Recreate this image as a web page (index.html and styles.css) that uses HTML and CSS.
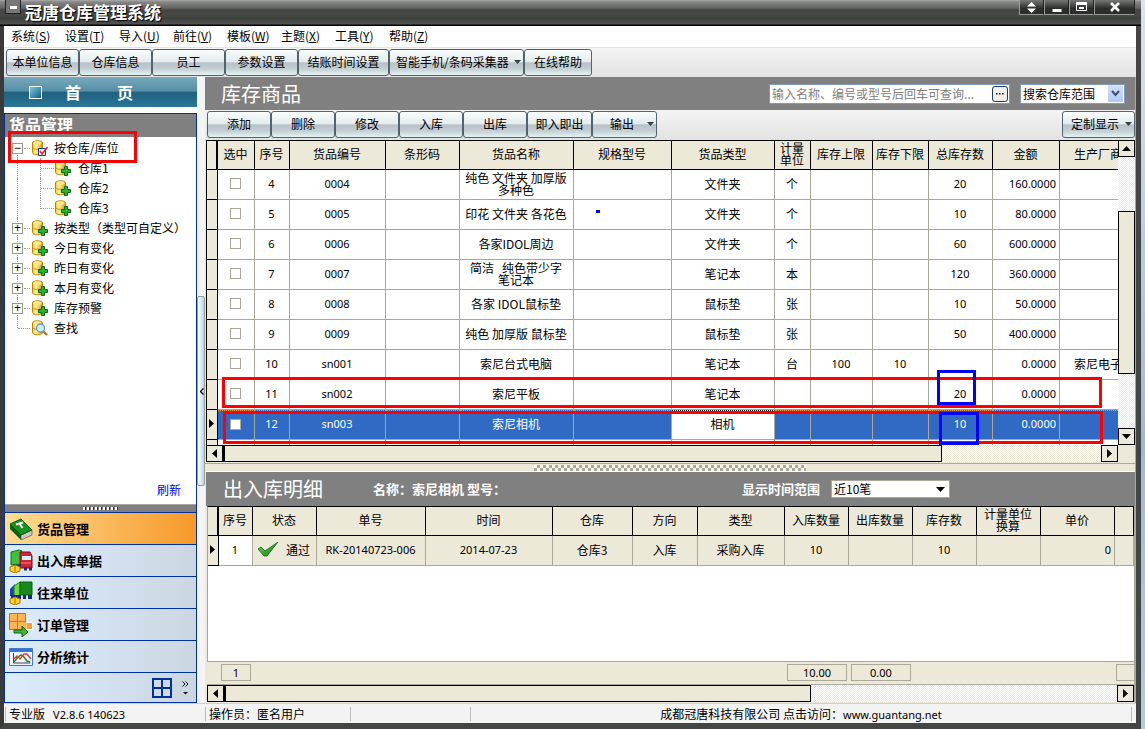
FILE: index.html
```html
<!DOCTYPE html>
<html lang="zh-CN">
<head>
<meta charset="utf-8">
<title>冠唐仓库管理系统</title>
<link rel="stylesheet" href="styles.css">
</head>
<body>
<svg class="defs" width="0" height="0" aria-hidden="true">
  <defs>
    <linearGradient id="gold" x1="0" x2="1"><stop offset="0" stop-color="#f6c81c"/><stop offset=".35" stop-color="#fff3a0"/><stop offset="1" stop-color="#d79a08"/></linearGradient>
    <linearGradient id="leaf" x1="0" y1="0" x2="1" y2="1"><stop offset="0" stop-color="#6fdc4c"/><stop offset="1" stop-color="#0c7a14"/></linearGradient>
    <symbol id="drum" viewBox="0 0 16 16"><path d="M.5 3C.5 0 10.500 0 10.500 3V12.500C10.500 15.500.5 15.500.5 12.500Z" fill="url(#gold)" stroke="#b8860b"/><ellipse cx="5.500" cy="3" rx="4" ry="1.800" fill="#ffe98a"/><path d="M1 8C2 9.800 9 9.800 10 8" fill="none" stroke="#c8920c"/></symbol>
    <symbol id="db-plus" viewBox="0 0 16 16"><use href="#drum" width="16" height="16"/><path d="M9.500 6.500h3v3h3v3h-3v3h-3v-3h-3v-3h3z" fill="#25b52a" stroke="#0b6b12"/></symbol>
    <symbol id="db-check" viewBox="0 0 16 16"><use href="#drum" width="16" height="16"/><path d="M6.500 8.500h7v7h-7z" fill="#fff" stroke="#1533b0"/><path d="M8 11l2 3 5.500-7" fill="none" stroke="#e8200c" stroke-width="1.600"/></symbol>
    <symbol id="db-find" viewBox="0 0 16 16"><use href="#drum" width="16" height="16"/><path d="M11 11l4 4" stroke="#c46a1e" stroke-width="2.400"/><circle cx="8.500" cy="8" r="4" fill="#cdeeff" stroke="#5b9bd8" stroke-width="1.300"/></symbol>
    <symbol id="up" viewBox="0 0 9 5"><path d="M0 5L4.500 0 9 5z"/></symbol>
    <symbol id="down" viewBox="0 0 9 5"><path d="M0 0h9L4.500 5z"/></symbol>
    <symbol id="left" viewBox="0 0 5 9"><path d="M5 0v9L0 4.500z"/></symbol>
    <symbol id="right" viewBox="0 0 5 9"><path d="M0 0v9l5-4.500z"/></symbol>
  </defs>
</svg>

<div class="window">
  <header class="titlebar">
    <span class="sysicon"></span>
    <h1>冠唐仓库管理系统</h1>
    <div class="winbtns">
      <button aria-label="置顶"><svg width="9" height="11" viewBox="0 0 9 11" fill="#fff"><path d="M0 4.500L4.500 0 9 4.500zM0 6.500h9L4.500 11z"/></svg></button>
      <button aria-label="最小化"><svg width="10" height="11" viewBox="0 0 10 11"><path d="M.5 7h9v3h-9z" fill="#fff"/></svg></button>
      <button aria-label="最大化"><svg width="11" height="10" viewBox="0 0 11 10" fill="none" stroke="#fff"><path d="M.5.5h10v8H.5z"/><path d="M1 2h9M3 6h5" stroke-width="2"/></svg></button>
      <button class="close" aria-label="关闭"><svg width="10" height="10" viewBox="0 0 10 10"><path d="M1 1l8 8M9 1L1 9" stroke="#fff" stroke-width="2.600"/></svg></button>
    </div>
  </header>

  <nav class="menu">
    <a href="#">系统(<u>S</u>)</a><a href="#">设置(<u>T</u>)</a><a href="#">导入(<u>U</u>)</a><a href="#">前往(<u>V</u>)</a><a href="#">模板(<u>W</u>)</a><a href="#">主题(<u>X</u>)</a><a href="#">工具(<u>Y</u>)</a><a href="#">帮助(<u>Z</u>)</a>
  </nav>

  <div class="bar bar-main">
    <button class="btn w73">本单位信息</button><button class="btn w73">仓库信息</button><button class="btn w73">员工</button><button class="btn w73">参数设置</button><button class="btn w91">结账时间设置</button><button class="btn w135 drop">智能手机/条码采集器<svg width="5" height="3"><use href="#down"/></svg></button><button class="btn w68">在线帮助</button>
  </div>

  <div class="body">
    <aside class="side">
      <button class="home"><span class="square"></span><span>首</span><span>页</span></button>
      <div class="panel">
        <h2>货品管理</h2>
        <ul class="tree">
          <li class="node first"><span class="exp">−</span><svg width="16" height="16"><use href="#db-check"/></svg>按仓库/库位</li>
          <li class="node child"><svg width="16" height="16"><use href="#db-plus"/></svg>仓库1</li>
          <li class="node child"><svg width="16" height="16"><use href="#db-plus"/></svg>仓库2</li>
          <li class="node child end"><svg width="16" height="16"><use href="#db-plus"/></svg>仓库3</li>
          <li class="node"><span class="exp">+</span><svg width="16" height="16"><use href="#db-plus"/></svg>按类型（类型可自定义）</li>
          <li class="node"><span class="exp">+</span><svg width="16" height="16"><use href="#db-plus"/></svg>今日有变化</li>
          <li class="node"><span class="exp">+</span><svg width="16" height="16"><use href="#db-plus"/></svg>昨日有变化</li>
          <li class="node"><span class="exp">+</span><svg width="16" height="16"><use href="#db-plus"/></svg>本月有变化</li>
          <li class="node"><span class="exp">+</span><svg width="16" height="16"><use href="#db-plus"/></svg>库存预警</li>
          <li class="node last"><span class="exp none"></span><svg width="16" height="16"><use href="#db-find"/></svg>查找</li>
        </ul>
        <a class="refresh" href="#">刷新</a>
        <div class="grip"><i></i></div>
        <nav class="groups">
          <button class="on"><svg width="24" height="24" viewBox="0 0 24 24"><path d="M1 7l11 11v5L1 12z" fill="#07620f"/><path d="M12 18l11-5v5l-11 5z" fill="#c9c9c9" stroke="#555" stroke-width=".7"/><path d="M1 7L12 2l11 11-11 5z" fill="#17921d" stroke="#075c0d"/><path d="M7 7.500l7-2M10.500 6.500l3 4.500" stroke="#fff" stroke-width="2"/></svg>货品管理</button>
          <button><svg width="24" height="24" viewBox="0 0 24 24"><path d="M2 3l8-2 3 1v13l-11 1z" fill="#3fc23a" stroke="#0c7518"/><path d="M11 3h10l2 4v12H11z" fill="#d22430" stroke="#7d0c1a"/><path d="M13 7h9v4h-9z" fill="#d5f0ff"/><path d="M12 14h10" stroke="#f08080"/><path d="M4 17h8M15 20h3M20 20h3" stroke="#202c75" stroke-width="3"/><path d="M1 18l5-2 5 2v4l-5 2-5-2z" fill="#ffd030" stroke="#b07800"/><path d="M6 17v6" stroke="#b07800"/></svg>出入库单据</button>
          <button><svg width="24" height="24" viewBox="0 0 24 24"><path d="M1 8l5-5v13l-5-1z" fill="#1740b4"/><path d="M5 5l6-4v13l-6 2z" fill="#6fdc35" stroke="#168a1c"/><path d="M11 1h12v13H11z" fill="#16881c" stroke="#0a6211"/><path d="M2 16h10M14 16h3M19 16h4" stroke="#15277a" stroke-width="4"/><path d="M1 18l5-2 5 2v4l-5 2-5-2z" fill="#ffd030" stroke="#b07800"/><path d="M6 17v6" stroke="#b07800"/></svg>往来单位</button>
          <button><svg width="24" height="24" viewBox="0 0 24 24"><path d="M.5.5h16v16H.5z" fill="#ffb455" stroke="#cd6a12"/><path d="M8.500 0v17M0 8.500h17" stroke="#d8751a"/><path d="M17 9.500h6.500v7H17z" fill="#ff9a2e" stroke="#fff"/><path d="M5 17h8v-4l6 6-6 5v-4H5z" fill="#46b52d" stroke="#0e6b12"/></svg>订单管理</button>
          <button><svg width="24" height="24" viewBox="0 0 24 24"><path d="M.5 3.500h23v17H.5z" fill="#eef4ff" stroke="#3f79cc"/><path d="M1 4h22v3H1z" fill="#3474d8"/><path d="M4.500 8v10h17" fill="none" stroke="#444"/><path d="M5 17l4-5 3-2 3 2 3 4 3 1" fill="none" stroke="#20902b" stroke-width="1.500"/><path d="M5 14l3-3 3 3 4-5 3 0 4 5" fill="none" stroke="#e4402a" stroke-width="1.500"/></svg>分析统计</button>
          <div class="more">
            <svg width="20" height="20" viewBox="0 0 20 20" fill="none" stroke="#00309c" stroke-width="2"><path d="M1 1h18v18H1zM10 1v18M1 10h18"/></svg>
            <svg width="7" height="14" viewBox="0 0 7 14" fill="none" stroke="#111"><path d="M.5.5l2.500 2.500-2.500 2.500M3.500.5l2.500 2.500-2.500 2.500"/><path d="M1 11h5L3.500 13.500z" fill="#111" stroke="none"/></svg>
          </div>
        </nav>
      </div>
    </aside>

    <div class="gutter"><button aria-label="收起"><svg width="4" height="7" viewBox="0 0 4 7" fill="none" stroke="#000" stroke-width="1.300"><path d="M3.500.5l-3 3 3 3"/></svg></button></div>

    <main class="main">
      <div class="heading">
        <h2>库存商品</h2>
        <div class="search"><input aria-label="查询" placeholder="输入名称、编号或型号后回车可查询..."><button aria-label="更多"><svg width="8" height="2" viewBox="0 0 8 2"><path d="M0 0h1.500v1.500H0zM3 0h1.500v1.500H3zM6 0h1.500v1.500H6z"/></svg></button></div>
        <div class="scope"><select aria-label="搜索仓库范围"><option>搜索仓库范围</option></select><span><svg width="9" height="7" viewBox="0 0 9 7"><path d="M1 1l3.500 4L8 1" fill="none" stroke="#3c4f78" stroke-width="2"/></svg></span></div>
      </div>
      <div class="bar bar-goods">
        <button class="btn w64">添加</button><button class="btn w64">删除</button><button class="btn w64">修改</button><button class="btn w64">入库</button><button class="btn w64">出库</button><button class="btn w65">即入即出</button><button class="btn w65 drop">输出<svg width="5" height="3"><use href="#down"/></svg></button>
        <button class="btn w73 drop push">定制显示<svg width="5" height="3"><use href="#down"/></svg></button>
      </div>

      <section class="goods">
        <div class="clip">
          <table class="grid stock">
            <colgroup><col class="c12"><col class="c37"><col class="c35"><col class="c96"><col class="c74"><col class="c114"><col class="c98"><col class="c103"><col class="c36"><col class="c62"><col class="c56"><col class="c64"><col class="c67"><col></colgroup>
            <thead><tr><th class="mark"></th><th>选中</th><th>序号</th><th>货品编号</th><th>条形码</th><th>货品名称</th><th>规格型号</th><th>货品类型</th><th>计量<br>单位</th><th>库存上限</th><th>库存下限</th><th>总库存数</th><th>金额</th><th>生产厂商</th></tr></thead>
            <tbody>
              <tr><td class="mark"></td><td><input type="checkbox" aria-label="选中4"></td><td class="n">4</td><td class="n">0004</td><td></td><td>纯色 文件夹 加厚版<br>多种色</td><td></td><td>文件夹</td><td>个</td><td></td><td></td><td class="n">20</td><td class="n r">160.0000</td><td></td></tr>
              <tr><td class="mark"></td><td><input type="checkbox" aria-label="选中5"></td><td class="n">5</td><td class="n">0005</td><td></td><td>印花 文件夹 各花色</td><td></td><td>文件夹</td><td>个</td><td></td><td></td><td class="n">10</td><td class="n r">80.0000</td><td></td></tr>
              <tr><td class="mark"></td><td><input type="checkbox" aria-label="选中6"></td><td class="n">6</td><td class="n">0006</td><td></td><td>各家IDOL周边</td><td></td><td>文件夹</td><td>个</td><td></td><td></td><td class="n">60</td><td class="n r">600.0000</td><td></td></tr>
              <tr><td class="mark"></td><td><input type="checkbox" aria-label="选中7"></td><td class="n">7</td><td class="n">0007</td><td></td><td>简洁 &nbsp; 纯色带少字<br>笔记本</td><td></td><td>笔记本</td><td>本</td><td></td><td></td><td class="n">120</td><td class="n r">360.0000</td><td></td></tr>
              <tr><td class="mark"></td><td><input type="checkbox" aria-label="选中8"></td><td class="n">8</td><td class="n">0008</td><td></td><td>各家 IDOL鼠标垫</td><td></td><td>鼠标垫</td><td>张</td><td></td><td></td><td class="n">10</td><td class="n r">50.0000</td><td></td></tr>
              <tr><td class="mark"></td><td><input type="checkbox" aria-label="选中9"></td><td class="n">9</td><td class="n">0009</td><td></td><td>纯色 加厚版 鼠标垫</td><td></td><td>鼠标垫</td><td>张</td><td></td><td></td><td class="n">50</td><td class="n r">400.0000</td><td></td></tr>
              <tr><td class="mark"></td><td><input type="checkbox" aria-label="选中10"></td><td class="n">10</td><td class="n">sn001</td><td></td><td>索尼台式电脑</td><td></td><td>笔记本</td><td>台</td><td class="n">100</td><td class="n">10</td><td></td><td class="n r">0.0000</td><td>索尼电子</td></tr>
              <tr><td class="mark"></td><td><input type="checkbox" aria-label="选中11"></td><td class="n">11</td><td class="n">sn002</td><td></td><td>索尼平板</td><td></td><td>笔记本</td><td></td><td></td><td></td><td class="n">20</td><td class="n r">0.0000</td><td></td></tr>
              <tr class="sel"><td class="mark"><svg width="5" height="9"><use href="#right"/></svg></td><td><input type="checkbox" aria-label="选中12"></td><td class="n">12</td><td class="n">sn003</td><td></td><td>索尼相机</td><td></td><td class="focus">相机</td><td></td><td></td><td></td><td class="n">10</td><td class="n r">0.0000</td><td></td></tr>
              <tr><td class="mark"></td><td></td><td></td><td></td><td></td><td></td><td></td><td></td><td></td><td></td><td></td><td></td><td></td><td></td></tr>
            </tbody>
          </table>
        </div>
        <div class="vscroll">
          <button aria-label="向上"><svg width="9" height="5"><use href="#up"/></svg></button>
          <i class="gap1"></i><i class="thumb"></i><i class="gap2"></i>
          <button aria-label="向下"><svg width="9" height="5"><use href="#down"/></svg></button>
        </div>
        <div class="hscroll">
          <button aria-label="向左"><svg width="5" height="9"><use href="#left"/></svg></button>
          <i class="thumb"></i><i class="rest"></i>
          <button aria-label="向右"><svg width="5" height="9"><use href="#right"/></svg></button>
        </div>
      </section>

      <div class="split"><i></i></div>

      <div class="heading heading-detail">
        <h2>出入库明细</h2>
        <strong class="item">名称：索尼相机 型号：</strong>
        <label class="range" for="range">显示时间范围</label>
        <div class="recent"><select id="range"><option>近10笔</option></select><svg width="9" height="5"><use href="#down"/></svg></div>
      </div>

      <section class="detail">
        <div class="rows">
          <table class="grid log">
            <colgroup><col class="c12"><col class="c34"><col class="c64"><col class="c109"><col class="c127"><col class="c80"><col class="c65"><col class="c87"><col class="c64"><col class="c64"><col class="c64"><col class="c64"><col class="c74"><col></colgroup>
            <thead><tr><th class="mark"></th><th>序号</th><th>状态</th><th>单号</th><th>时间</th><th>仓库</th><th>方向</th><th>类型</th><th>入库数量</th><th>出库数量</th><th>库存数</th><th>计量单位<br>换算</th><th>单价</th><th></th></tr></thead>
            <tbody><tr><td class="mark"><svg width="5" height="9"><use href="#right"/></svg></td><td class="n white">1</td><td><span class="state"><svg width="21" height="15" viewBox="0 0 21 15"><path d="M0 7l3-2 4 4L20 0 9 14H6z" fill="url(#leaf)" stroke="#0c6d12" stroke-width=".8"/></svg>通过</span></td><td class="n">RK-20140723-006</td><td class="n">2014-07-23</td><td>仓库3</td><td>入库</td><td>采购入库</td><td class="n">10</td><td></td><td class="n">10</td><td></td><td class="n r">0</td><td></td></tr></tbody>
          </table>
        </div>
        <div class="totals"><output class="t30">1</output><output class="t60 sum">10.00</output><output class="t60">0.00</output><output class="t18"></output></div>
        <div class="hscroll">
          <button aria-label="向左"><svg width="5" height="9"><use href="#left"/></svg></button>
          <i class="thumb short"></i><i class="rest"></i>
          <button aria-label="向右"><svg width="5" height="9"><use href="#right"/></svg></button>
        </div>
      </section>
    </main>
  </div>

  <footer class="status">
    <span class="s1">专业版 &nbsp; <small>V2.8.6 140623</small></span><span class="s2">操作员：匿名用户</span><span class="s3"></span><span class="s4">成都冠唐科技有限公司 点击访问：<small>www.guantang.net</small></span>
  </footer>
</div>

<div class="note tree-note"></div>
<div class="note row-a"></div>
<div class="note row-b"></div>
<div class="note blue qty-a"></div>
<div class="note blue qty-b"></div>
<div class="dot"></div>
</body>
</html>
```
FILE: styles.css
```css
* { box-sizing: border-box; }
html, body { height: 100%; }
body {
  margin: 0;
  position: relative;
  overflow: hidden;
  background: linear-gradient(#d8e4f4, #9db8e0 60%, #b4c8e6);
  color: #000;
  font: 12px/14px "Noto Sans CJK SC", sans-serif;
}
button, input, select { font: inherit; color: inherit; margin: 0; padding: 0; border: 0; border-radius: 0; }
h1, h2, ul { margin: 0; padding: 0; list-style: none; }
a { color: inherit; text-decoration: none; }
i { display: block; }
svg { flex: none; display: block; }
.defs { position: absolute; }

.window {
  height: 100vh;
  margin-right: 4px;
  display: flex;
  flex-direction: column;
  border: solid #444644;
  border-width: 0 5px 6px 4px;
  border-left-color: #3a3a3a;
  border-radius: 0 6px 0 0;
  background: #f0f0f0;
}
.titlebar {
  flex: none;
  height: 26px;
  margin: 0 -5px 0 -4px;
  padding-left: 5px;
  display: flex;
  align-items: flex-start;
  background: linear-gradient(#aaa 0, #868686 2px, #646464 8px, #424542 10px, #464946 15px, #3d403d 18px, #505350 24px, #000 25px);
  color: #fff;
}
.sysicon { width: 16px; height: 14px; border: 1px solid #222; border-top: 0; background: linear-gradient(#fff, #fff) 4px 6px / 7px 3px no-repeat #777; }
.titlebar h1 { flex: 1; padding-left: 4px; font-size: 17px; line-height: 23px; text-shadow: 1px 1px 1px #000; }
.winbtns { display: flex; margin-right: 6px; }
.winbtns button { width: 25px; height: 15px; display: flex; align-items: center; justify-content: center; border: 1px solid #999; border-top: 0; border-right-color: #222; background: linear-gradient(#777, #2b2e2b 60%); }
.winbtns .close { width: 41px; }

.menu { flex: none; height: 22px; padding: 0 7px 1px; display: grid; grid-auto-flow: column; grid-auto-columns: 54px; justify-content: start; align-items: center; background: #fff; border-bottom: 1px solid #e4e4e4; }

.bar { flex: none; display: flex; align-items: center; background: linear-gradient(#f4f4f4, #e3e3e3); }
.bar-main { height: 29px; padding-left: 2px; }
.bar-goods { height: 30px; padding: 0 0 1px 2px; }
.btn { height: 27px; padding-bottom: 2px; display: flex; align-items: center; justify-content: center; border: 1px solid #53636b; border-radius: 3px; background: linear-gradient(#f8fdfd, #e6ebed 46%, #b7c1c9 52%, #c3ced3 75%, #e3f4f2); white-space: nowrap; }
.drop { justify-content: space-between; padding: 0 2px 2px 6px; }
.drop svg { fill: #344; width: 7px; height: 4px; }
.bar-goods .drop:not(.push) { padding-left: 17px; }
.bar-goods .push { margin-left: auto; padding-left: 8px; }
.w64 { width: 64px; } .w65 { width: 65px; } .w68 { width: 68px; } .w73 { width: 73px; } .w91 { width: 91px; } .w135 { width: 135px; }

.body { flex: 1; min-height: 0; display: flex; }
.side { width: 193px; flex: none; display: flex; flex-direction: column; background: #fff; }
.home { flex: none; height: 30px; display: flex; align-items: center; margin-bottom: 6px; padding-left: 25px; color: #fff; font-size: 16px; font-weight: bold; background: linear-gradient(#79a9bb, #5590a8 46%, #1f6180 52%, #2a7896); }
.home span + span { margin-left: 23px; }
.home span:last-child { margin-left: 36px; }
.home .square { width: 13px; height: 13px; border: 1px solid #fff; background: linear-gradient(135deg, #83c4dc, #0b6389); }
.panel { flex: 1; display: flex; flex-direction: column; border: 1px solid #00309c; background: #fff; }
.panel h2 { height: 23px; padding-left: 4px; background: #808080; color: #fff; font-size: 16px; line-height: 20px; }
.tree { padding-top: 1px; }
.node { position: relative; height: 20px; padding-left: 7px; display: flex; align-items: center; gap: 6px; white-space: nowrap; }
.node::before { content: ""; position: absolute; left: 12px; top: 0; bottom: 0; border-left: 1px dotted #999; }
.node.first::before { top: 10px; }
.node.last::before { bottom: 10px; }
.node.child { padding-left: 50px; gap: 7px; }
.node.child::after { content: ""; position: absolute; left: 35px; top: 0; width: 13px; height: 20px; border-left: 1px dotted #999; background: repeating-linear-gradient(90deg, #999 0 1px, transparent 1px 2px) 0 10px / 100% 1px no-repeat; }
.node.end::after { height: 11px; }
.node .exp { position: relative; width: 11px; height: 11px; margin-right: 3px; border: 1px solid #9a9a88; background: #fff; font: 12px/9px "Liberation Sans", sans-serif; text-align: center; }
.node .exp::after { content: ""; position: absolute; left: 11px; top: 4px; width: 6px; border-top: 1px dotted #999; }
.node .none { border-color: transparent; background: none; }
.node .none::after { left: 5px; width: 12px; }
.refresh { margin: auto 15px 7px auto; color: #00f; }
.grip { height: 8px; padding-top: 2px; background: #808080; border-top: 1px solid #aca899; }
.grip i { width: 36px; height: 3px; margin: auto; background: repeating-linear-gradient(90deg, #fff 0 2px, #333 2px 3px, transparent 3px 4px); }
.groups button { width: 100%; height: 32px; padding-left: 4px; display: flex; align-items: center; gap: 4px; border-top: 1px solid #00309c; background: linear-gradient(90deg, #dcecf9, #ccd6e3); font-size: 13px; font-weight: bold; }
.groups .on { background: linear-gradient(90deg, #ffdd94, #f8992a); }
.more { height: 30px; padding: 0 7px; display: flex; align-items: center; justify-content: flex-end; gap: 10px; border-top: 1px solid #00309c; background: linear-gradient(90deg, #dcecf9, #ccd6e3); }

.gutter { width: 8px; flex: none; display: flex; align-items: flex-start; background: #f4f4f4; }
.gutter button { width: 8px; height: 190px; margin-top: 219px; padding-left: 2px; border: 1px solid #9d9d92; border-radius: 2px; background: linear-gradient(90deg, #fff, #b8d4ee); }

.main { flex: 1; min-width: 0; display: flex; flex-direction: column; border-right: 1px solid #aca899; background: #ece9d8; }
.heading { flex: none; height: 33px; padding: 0 10px 0 16px; display: flex; align-items: center; background: #808080; color: #fff; }
.heading h2 { font-size: 20px; font-weight: normal; line-height: 24px; }
.search { width: 241px; height: 20px; margin-left: auto; display: flex; align-items: center; border: 1px solid #7f9db9; background: #fff; }
.search input { flex: 1; min-width: 0; padding-left: 2px; background: none; color: #000; outline: 0; }
.search input::placeholder { color: #808080; opacity: 1; }
.search button { width: 16px; height: 16px; margin-right: 1px; display: grid; place-items: center; border: 1px solid #123f6d; border-radius: 3px; background: #f1f0e8; }
.scope { width: 105px; height: 20px; margin-left: 10px; display: flex; align-items: center; border: 1px solid #7f9db9; background: #fff; color: #000; }
select { flex: 1; min-width: 0; height: 16px; padding-left: 2px; appearance: none; background: none; }
.scope span { width: 15px; height: 17px; display: grid; place-items: center; margin-right: 1px; background: linear-gradient(#d3e0fd, #b4c8f6); }

.goods { flex: none; margin-left: 1px; display: grid; grid-template-columns: minmax(0, 1fr) 17px; grid-template-rows: 305px 18px; }
.clip { overflow: hidden; background: #fff; border-top: 1px solid #000; border-left: 1px solid #000; }
.grid { width: 100%; table-layout: fixed; border-collapse: separate; border-spacing: 0; line-height: 12px; }
.grid th, .grid td { height: 30px; padding: 0 1px 2px 0; overflow: hidden; text-align: center; vertical-align: middle; white-space: nowrap; border-right: 1px solid #aca899; border-bottom: 1px solid #aca899; }
.grid th { height: 29px; font-weight: normal; background: #ece9d8; border-color: #000; }
.grid .mark { background: #ece9d8; border-color: #000; }
.grid th.mark { border-right-width: 2px; }
.mark svg { margin: auto; }
.grid .n { font-family: "Noto Sans", sans-serif; font-size: 11px; }
.grid .r { text-align: right; padding-right: 3px; }
.stock { min-width: 931px; }
.c12 { width: 11px; } .c34 { width: 34px; } .c35 { width: 35px; } .c36 { width: 36px; } .c37 { width: 37px; } .c56 { width: 56px; } .c62 { width: 62px; } .c64 { width: 64px; } .c65 { width: 65px; } .c67 { width: 67px; } .c74 { width: 74px; } .c80 { width: 80px; } .c87 { width: 87px; } .c96 { width: 96px; } .c98 { width: 98px; } .c103 { width: 103px; } .c109 { width: 109px; } .c114 { width: 114px; } .c127 { width: 127px; }
.grid input { display: block; width: 11px; height: 11px; margin: auto; appearance: none; border: 1px solid #aca899; background: #fff; }
.sel td:not(.mark) { background: #316ac5; color: #fff; border-top: 1px dotted #e09a3c; }
.sel td.focus { background: #fff; color: #000; border-top-color: #000; }

.vscroll, .hscroll { display: flex; background: repeating-conic-gradient(#ece9d8 0 25%, #fff 0 50%) 0 0 / 2px 2px; }
.vscroll { flex-direction: column; }
.vscroll button, .hscroll button { flex: none; width: 17px; height: 17px; display: grid; place-items: center; border: 1px solid #000; background: #ece9d8; }
.thumb { border: 1px solid #000; background: #ece9d8; }
.gap1 { flex: 54; }
.vscroll .thumb { flex: 163; }
.gap2 { flex: 54; }
.hscroll { height: 17px; }
.hscroll .thumb { flex: 718; border-left-width: 2px; }
.hscroll .rest { flex: 160; }
.hscroll .short { flex: 586; }
.hscroll .short + .rest { flex: 307; }

.split { flex: none; height: 9px; padding-top: 1px; border-top: 1px solid #aca899; border-bottom: 1px solid #fff; }
.split i { width: 272px; height: 6px; margin: auto; background: repeating-conic-gradient(#aca899 0 25%, #fff8 0 50%) 0 0 / 6px 6px; }
.heading-detail { height: 34px; margin-left: 1px; padding-left: 17px; }
.item { margin-left: 50px; font-size: 13px; }
.range { margin-left: auto; font-size: 13px; font-weight: bold; }
.recent { width: 119px; height: 18px; margin: 0 175px 0 11px; padding-right: 4px; display: flex; align-items: center; border: 1px solid #aca899; background: #fff; color: #000; }

.detail { flex: 1; min-height: 0; margin: 0 0 1px 2px; display: flex; flex-direction: column; border-right: 1px solid #aca899; }
.rows { flex: 1; min-height: 0; overflow: hidden; background: #fff; border-top: 1px solid #000; border-left: 1px solid #aca899; }
.log td { background: #ece9d8; }
.log td.white { background: #fff; }
.state { display: flex; align-items: center; justify-content: center; gap: 7px; }
.totals { flex: none; height: 24px; padding: 2px 0 3px 14px; display: flex; gap: 4px; border: solid #aca899; border-width: 1px 0; overflow: hidden; }
.totals output { flex: none; border: 1px solid #aca899; font: 11px/16px "Noto Sans", sans-serif; text-align: center; }
.t30 { width: 30px; } .t60 { width: 60px; }
.totals .sum { margin-left: 532px; }
.totals .t18 { width: 18px; margin-left: auto; border-right: 0; }

.status { flex: none; height: 20px; display: flex; align-items: center; background: #f3f3f3; border-top: 1px solid #d0d0d0; white-space: nowrap; }
.status small { font: 11px/14px "Noto Sans", sans-serif; }
.status span { height: 14px; padding-left: 3px; border-left: 1px solid #bbb; }
.s1 { width: 200px; margin-left: 1px; }
.s2 { width: 145px; }
.s3 { width: 120px; }
.s4 { flex: 1; border-right: 1px solid #bbb; margin-right: 4px; text-align: center; padding-right: 3px; }

.note { position: absolute; border: 3px solid #f00; pointer-events: none; }
.tree-note { left: 8px; top: 131px; width: 129px; height: 32px; }
.row-a { left: 222px; top: 377px; width: 880px; height: 31px; }
.row-b { left: 223px; top: 411px; width: 880px; height: 33px; }
.blue { border-color: #00f; }
.qty-a { left: 937px; top: 370px; width: 39px; height: 35px; }
.qty-b { left: 939px; top: 412px; width: 40px; height: 33px; }
.dot { position: absolute; left: 596px; top: 210px; width: 4px; height: 3px; background: #00f; }
```
